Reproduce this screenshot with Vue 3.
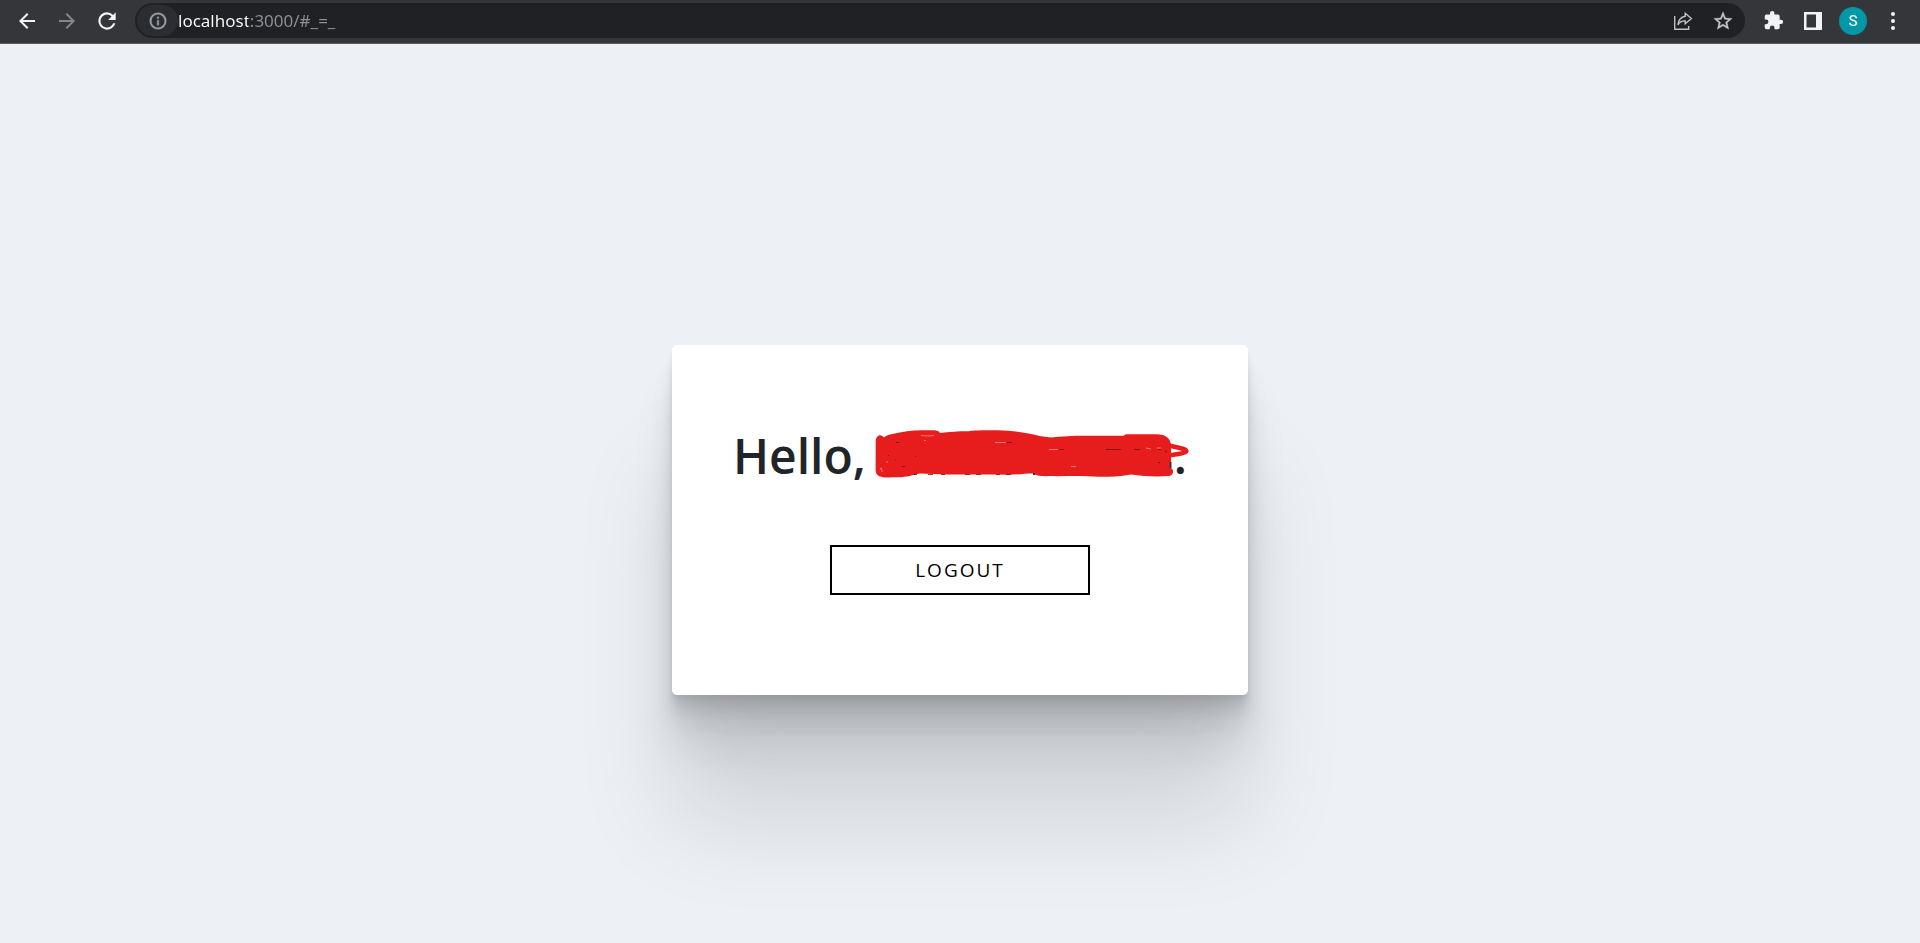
<script setup>
import { ref } from 'vue'

const address = ref('localhost:3000/#_=_')
</script>

<template>
  <div class="window">
    <header class="toolbar">
      <nav class="group" aria-label="Navigation">
        <button class="tool" type="button" aria-label="Back">
          <svg width="24" height="24" viewBox="0 0 24 24"><path fill="#f1f3f4" d="M20 11H7.83l5.59-5.59L12 4l-8 8 8 8 1.41-1.41L7.83 13H20z" /></svg>
        </button>
        <button class="tool" type="button" aria-label="Forward">
          <svg width="24" height="24" viewBox="0 0 24 24"><path fill="#85868a" d="M12 4l-1.41 1.41L16.17 11H4v2h12.17l-5.58 5.59L12 20l8-8z" /></svg>
        </button>
        <button class="tool" type="button" aria-label="Reload">
          <svg width="26" height="26" viewBox="0 0 24 24"><path fill="#f1f3f4" d="M17.65 6.35A7.96 7.96 0 0 0 12 4a8 8 0 1 0 7.73 10h-2.08A6 6 0 1 1 12 6c1.66 0 3.14.69 4.22 1.78L13 11h7V4z" /></svg>
        </button>
      </nav>

      <div class="omnibox">
        <button class="site-info" type="button" aria-label="View site information">
          <svg width="20" height="20" viewBox="0 0 24 24"><path fill="#9aa0a6" stroke="#9aa0a6" stroke-width=".4" d="M11 7h2v2h-2zm0 4h2v6h-2zm1-9a10 10 0 1 0 0 20 10 10 0 0 0 0-20zm0 18a8 8 0 1 1 0-16 8 8 0 0 1 0 16z" /></svg>
        </button>
        <input v-model="address" class="address" type="text" aria-label="Address" spellcheck="false" />
        <button class="tool" type="button" aria-label="Share">
          <svg width="20" height="20" viewBox="0 0 20 20" fill="none" stroke="#bdc1c6" stroke-width="1.4"><path d="M1.7 5v13.3h14V15" /><path d="M12.2 2.2l6.2 5.3-6.2 5.3V9.9C8.6 9.8 6.6 11 5 13.8c.4-4.4 2.7-7.7 7.2-8.5z" /></svg>
        </button>
        <button class="tool" type="button" aria-label="Bookmark this tab">
          <svg width="22" height="22" viewBox="0 0 24 24"><path fill="#c4c7cb" stroke="#c4c7cb" stroke-width=".4" d="M22 9.24l-7.19-.62L12 2 9.19 8.63 2 9.24l5.46 4.73L5.82 21 12 17.27 18.18 21l-1.63-7.03zM12 15.4l-3.76 2.27 1-4.28-3.32-2.88 4.38-.38L12 6.1l1.71 4.04 4.38.38-3.32 2.88 1 4.28z" /></svg>
        </button>
      </div>

      <div class="group">
        <button class="tool" type="button" aria-label="Extensions">
          <svg width="21" height="21" viewBox="0 0 24 24"><path fill="#f1f3f4" d="M20.5 11H19V7a2 2 0 0 0-2-2h-4V3.5a2.5 2.5 0 0 0-5 0V5H4a2 2 0 0 0-2 2v3.8h1.5a2.7 2.7 0 0 1 0 5.4H2V20a2 2 0 0 0 2 2h3.8v-1.5a2.7 2.7 0 0 1 5.4 0V22H17a2 2 0 0 0 2-2v-4h1.5a2.5 2.5 0 0 0 0-5z" /></svg>
        </button>
        <button class="tool" type="button" aria-label="Side panel">
          <svg width="18" height="18" viewBox="0 0 18 18"><path fill="#f1f3f4" fill-rule="evenodd" d="M0 0h18v18H0zM2.5 2.5v13H12v-13z" /></svg>
        </button>
        <button class="tool" type="button" aria-label="Profile"><span class="avatar">S</span></button>
        <button class="tool" type="button" aria-label="Menu">
          <svg width="4" height="18" viewBox="0 0 4 18" fill="#f1f3f4"><circle cx="2" cy="2" r="2" /><circle cx="2" cy="9" r="2" /><circle cx="2" cy="16" r="2" /></svg>
        </button>
      </div>
    </header>

    <main class="page">
      <section class="card">
        <h1 class="greeting">
          <span>Hello,</span>
          <svg class="redaction" width="299" height="54" viewBox="0 0 299 54" role="img" aria-label="Hidden name">
            <path fill="#e71d1d" d="M.7 12C1 7 5 4 9 8.5c2-2 5-3 8.5-3.5C27 3 37 1.300 46 1.300h13c3 0 5 1 6 2.700 9-1.200 18-1.700 28-1.700 0-1 18-1.300 30-1.100 16 .3 29 2.700 43 6l10 1.400c12-1.600 24-2 37-1.900h36c0-1.400 2-1.500 5-1.500h28c7 0 13 3 14 10.300V39c4 3 2 8-3 8-13 1.200-25 0-37-1.500-12 2.300-22 2.200-33 2.200-16-1.500-31-.3-47-.6-7 .3-14 .3-18-2.600-8 0-16 1.200-25 1.200-30-.5-59 .4-88-1.200-7 1.500-13 3.700-22 3.800C9 48.600 1 49.500.6 41z" />
            <path fill="none" stroke="#e71d1d" stroke-width="4.500" stroke-linejoin="round" d="M294 16.500l13 3c6 2 6 3.500-1 5l-12 2" />
            <path fill="none" stroke="#f6a09c" stroke-width=".7" d="M46 6.500c5 .5 9 .5 13 0M120 13.500h11M174 20.500h9M196 37.500h5M5 40l1.500-1 .5 4M12 34v-2M49 11.500h2M271 19l5 1M282 19h4" />
            <path fill="none" stroke="#66161a" stroke-width=".8" d="M21 13.500h3M13 26.500h1M20 31h1M27 37.500h3M40 27.500h1M131 13.500h6M184 20.500h5M231 20.500h15M259 20.500h6M283 20.500h3M291 21v3M283 33.500h2M39 45.500h3M53 45.500h5M66 45.500h4M90 45.500h5M101 45.500h5M121 45.500h4M131 45.500h5" />
            <path fill="none" stroke="#3a3038" stroke-width="2" d="M295.500 33v6M159 44v2" />
          </svg>
          <span>.</span>
        </h1>
        <button class="logout" type="button">LOGOUT</button>
      </section>
    </main>
  </div>
</template>

<style>
body {
  margin: 0;
  background: #edf1f6;
}
</style>

<style scoped>
.window {
  display: flex;
  flex-direction: column;
  min-height: 100vh;
  font-family: "Open Sans", "Noto Sans", sans-serif;
}

button {
  padding: 0;
  border: 0;
  background: none;
  font: inherit;
  color: inherit;
}

.toolbar {
  display: flex;
  gap: 8px;
  padding: 3px 7px 5px 7px;
  border-bottom: 1px solid #5b5c60;
  background: #35363a;
}

.group {
  display: flex;
}

.tool {
  display: flex;
  align-items: center;
  justify-content: center;
  width: 40px;
  height: 35px;
}

.omnibox {
  display: flex;
  flex: 1;
  align-items: center;
  padding: 0 2px;
  border-radius: 18px;
  background: #202124;
}

.site-info {
  display: flex;
  align-items: center;
  justify-content: center;
  width: 41px;
  height: 31px;
  border-radius: 16px;
  background: #2c2d31;
}

.address {
  flex: 1;
  min-width: 0;
  height: 30px;
  padding: 0;
  border: 0;
  outline: 0;
  background: linear-gradient(90deg, #ffffff 70px, #8d9196 70px);
  background-clip: text;
  -webkit-background-clip: text;
  color: transparent;
  font-family: "Noto Sans", sans-serif;
  font-size: 17px;
}

.avatar {
  width: 28px;
  border-radius: 50%;
  background: #0097a7;
  color: #ffffff;
  font-family: Roboto, sans-serif;
  font-size: 15px;
  line-height: 28px;
  text-align: center;
}

.page {
  display: flex;
  flex: 1;
  align-items: center;
  justify-content: center;
  padding-top: 53px;
}

.card {
  display: flex;
  flex-direction: column;
  align-items: center;
  gap: 59px;
  box-sizing: border-box;
  width: 30%;
  min-width: 500px;
  padding: 81px 0 100px;
  border-radius: 5px;
  background: #ffffff;
  box-shadow:
    0 4px 3px rgba(0, 0, 0, 0.034),
    0 8px 7px rgba(0, 0, 0, 0.048),
    0 16px 13px rgba(0, 0, 0, 0.06),
    0 28px 22px rgba(0, 0, 0, 0.072),
    0 52px 42px rgba(0, 0, 0, 0.086),
    0 125px 100px rgba(0, 0, 0, 0.12);
}

.greeting {
  display: flex;
  align-items: center;
  margin: 0;
  color: #212529;
  font-size: 48px;
  font-weight: 600;
  line-height: 60px;
}

.redaction {
  margin-left: 9px;
  overflow: visible;
}

.logout {
  width: 260px;
  height: 50px;
  border: 2px solid #000000;
  color: #000000;
  font-size: 19px;
  font-weight: 400;
  letter-spacing: 2px;
}
</style>
